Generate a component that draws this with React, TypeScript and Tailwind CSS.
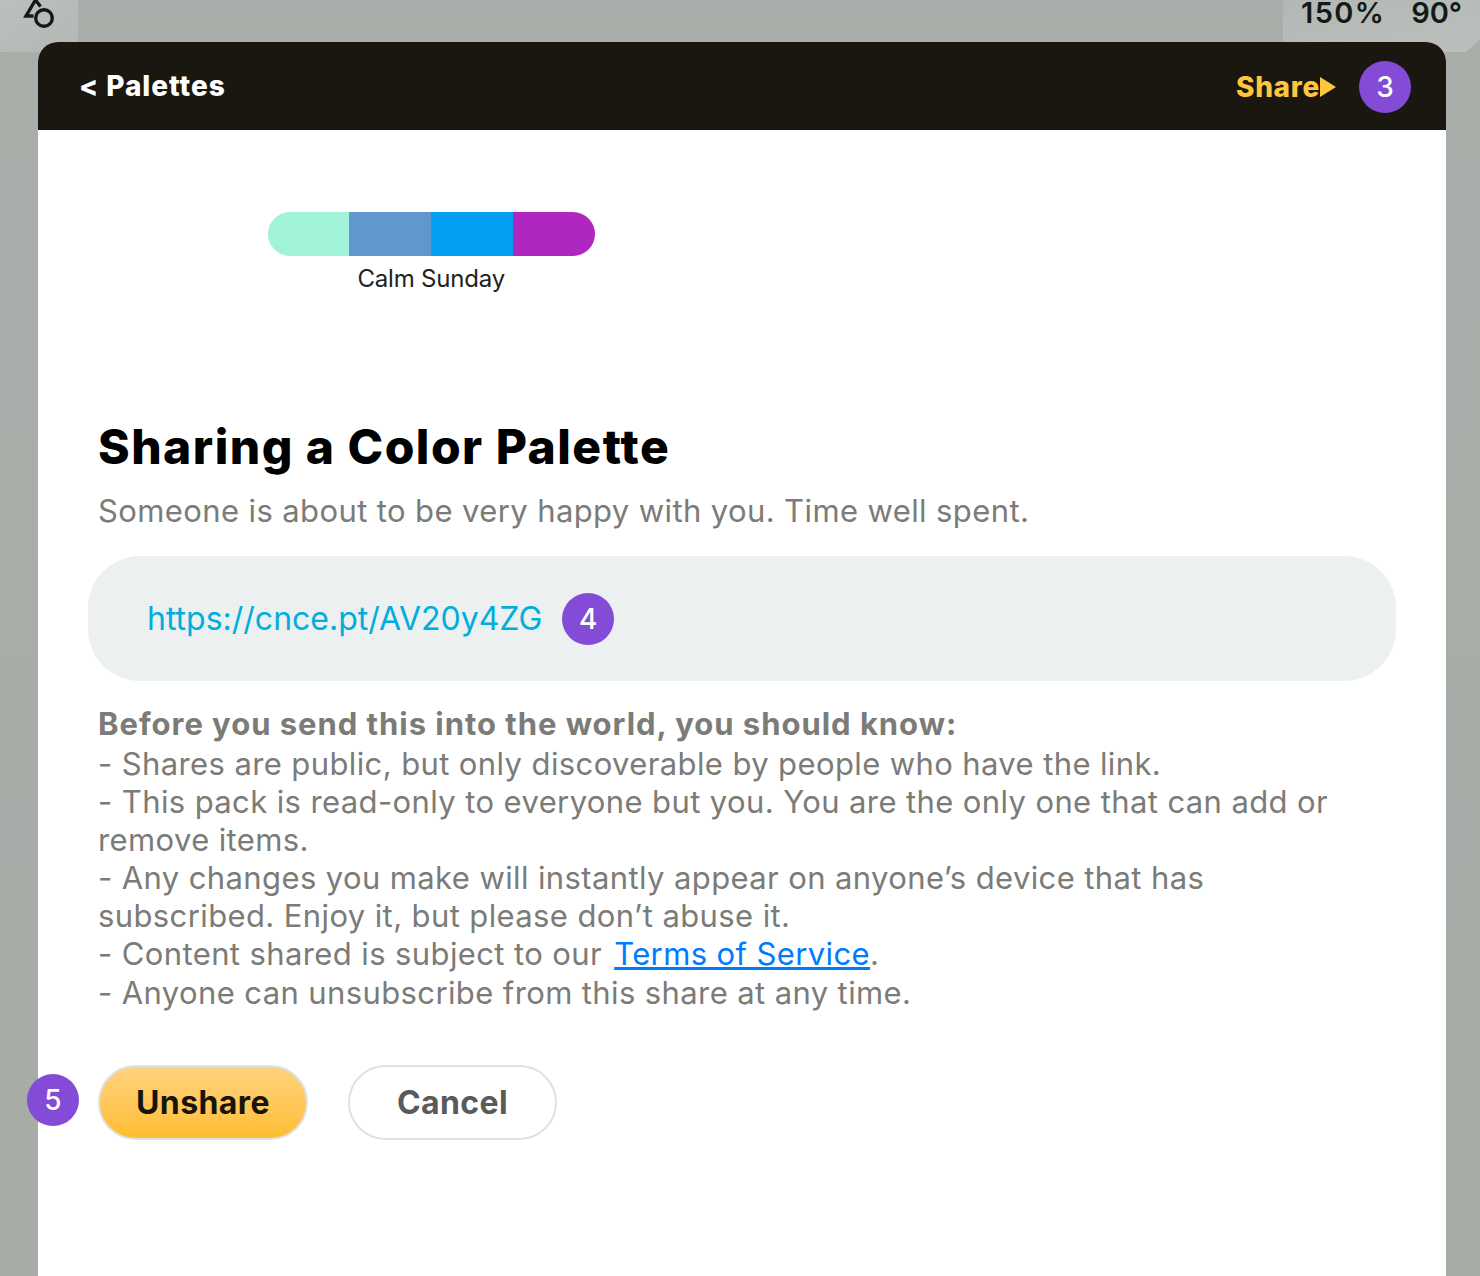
import React from 'react'

function Badge({ n }: { n: number }) {
  return (
    <span className="flex h-[52px] w-[52px] shrink-0 items-center justify-center rounded-full bg-[#844bd6] text-[28px] font-medium leading-none text-white">
      {n}
    </span>
  )
}

const swatches = ['bg-[#a0f2d8]', 'bg-[#6098ce]', 'bg-[#049ff5]', 'bg-[#b026c0]']

export default function App() {
  return (
    <div className="relative h-[1276px] w-[1480px] overflow-hidden bg-gradient-to-b from-[#a9aeaa] to-[#a7aca7] font-['Inter',sans-serif]">
      {/* toolbar behind the sheet */}
      <div className="flex h-[52px] items-start justify-between">
        <div className="relative h-[52px] w-[78px] bg-gradient-to-br from-[#bcc0bc] to-[#b4b8b4]">
          <svg className="absolute left-0 top-0" width="78" height="52" viewBox="0 0 78 52" fill="none" stroke="#121a17" strokeWidth="3.4">
            <path d="M33.5 16 H26 L35.5 0 L40.5 6.5" strokeLinejoin="miter" />
            <circle cx="44" cy="18" r="8.3" />
          </svg>
        </div>
        <div className="relative flex h-[52px] w-[197px] justify-start gap-[26px] bg-gradient-to-br from-[#b4b8b4] to-[#bcc0bc] pl-[18px] text-[29px] font-semibold leading-[26px] text-[#121a17]">
          <span className="tracking-[1.4px]">150%</span>
          <span className="tracking-[-0.2px]">90°</span>
          <svg className="absolute bottom-0 right-0" width="14" height="13" viewBox="0 0 14 13">
            <path d="M14 0 L0 13 H14 Z" fill="#a9aeaa" />
          </svg>
        </div>
      </div>

      {/* sheet */}
      <div className="absolute left-[38px] top-[42px] h-[1234px] w-[1408px] rounded-t-[20px] bg-white">
        <div className="flex h-[88px] items-center justify-between rounded-t-[20px] bg-[#1a1710] pl-[41px] pr-[35px]">
          <span className="text-[28px] font-extrabold tracking-[0.95px] text-white">&lt; Palettes</span>
          <div className="mt-[2px] flex items-center gap-[23px]">
            <div className="mb-[1px] flex items-center">
              <span className="text-[28px] font-extrabold tracking-[0.7px] text-[#ffc53d]">Share</span>
              <svg width="16" height="20" viewBox="0 0 16 20">
                <path d="M0 0 L16 10 L0 20 Z" fill="#ffc53d" />
              </svg>
            </div>
            <Badge n={3} />
          </div>
        </div>

        <div className="pl-[60px] pr-[50px]">
          <div className="ml-[169.5px] mt-[82px] w-[327.5px]">
            <div className="flex h-[44px] overflow-hidden rounded-[22px]">
              {swatches.map((c) => (
                <div key={c} className={`flex-1 ${c}`} />
              ))}
            </div>
            <p className="mt-[8px] text-center text-[24px] leading-[30px] tracking-[-0.18px] text-[#222220]">Calm Sunday</p>
          </div>

          <h1 className="mt-[123px] text-[48px] font-extrabold leading-[60px] tracking-[1.47px] text-black">Sharing a Color Palette</h1>
          <p className="mt-[14px] text-[31px] leading-[40px] tracking-[0.39px] text-[#7b7b77]">
            Someone is about to be very happy with you. Time well spent.
          </p>

          <div className="-ml-[10px] mt-[25px] flex h-[125px] items-center gap-[20px] rounded-[52px] bg-[#ecf0f1] pl-[59px]">
            <span className="text-[32px] text-[#00aedb]">https://cnce.pt/AV20y4ZG</span>
            <Badge n={4} />
          </div>

          <div className="mr-[60px] mt-[23px] text-[31px] leading-[38px] tracking-[0.39px] text-[#7b7b77]">
            <p className="mb-[1px] font-bold leading-[40px] tracking-[0.97px]">Before you send this into the world, you should know:</p>
            <p>- Shares are public, but only discoverable by people who have the link.</p>
            <p>- This pack is read-only to everyone but you. You are the only one that can add or remove items.</p>
            <p>- Any changes you make will instantly appear on anyone’s device that has subscribed. Enjoy it, but please don’t abuse it.</p>
            <p>
              - Content shared is subject to our <a href="#" className="ml-[3px] text-[#007aff] underline">Terms of Service</a>.
            </p>
            <p className="mt-[1px]">- Anyone can unsubscribe from this share at any time.</p>
          </div>

          <div className="relative mt-[53px] flex gap-[40px]">
            <div className="absolute left-[-71px] top-[9px]">
              <Badge n={5} />
            </div>
            <button className="h-[75px] w-[210px] rounded-[38px] border-2 border-[#dde2e4] bg-gradient-to-b from-[#ffd27c] to-[#ffbe2d] text-[32px] font-bold tracking-[0.4px] text-[#17140c]">
              Unshare
            </button>
            <button className="h-[75px] w-[209px] rounded-[38px] border-2 border-[#dde2e4] bg-white text-[32px] font-bold tracking-[0.4px] text-[#5a5a5a]">
              Cancel
            </button>
          </div>
        </div>
      </div>
    </div>
  )
}
